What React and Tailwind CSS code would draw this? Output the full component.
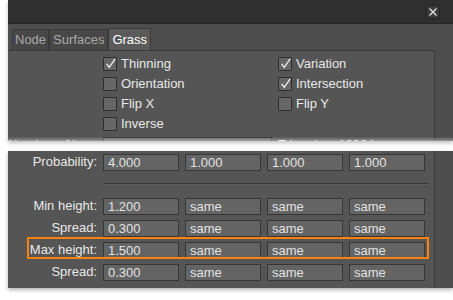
import React from "react";

function Check({ checked, label }) {
  return (
    <div className="flex items-center h-[20px] gap-[4px]">
      <div className="w-[14px] h-[14px] border border-[#2e2e2e] bg-[#666666] rounded-[1px] flex items-center justify-center">
        {checked && (
          <svg width="13" height="13" viewBox="0 0 13 13" className="-mt-[2px] ml-[1px]">
            <path d="M2 7 L5 11 L12 1" fill="none" stroke="#eeeeee" strokeWidth="1.6" />
          </svg>
        )}
      </div>
      <span className="text-[13px] text-[#e8e8e8]">{label}</span>
    </div>
  );
}

function Field({ value }) {
  return (
    <div className="h-[17px] border border-[#363636] bg-[#646464] px-[4px] flex items-center text-[13px] text-[#e2e2e2] leading-none">
      {value}
    </div>
  );
}

function Row({ label, values, highlight }) {
  return (
    <div className="relative flex items-center h-[22px]">
      <div className="w-[90px] text-right text-[13px] text-[#e8e8e8] pr-[1px] whitespace-nowrap">{label}</div>
      <div className="ml-[5px] grid grid-cols-[76px_76px_76px_76px] gap-[6px]">
        {values.map((v, i) => (
          <Field key={i} value={v} />
        ))}
      </div>
      {highlight && (
        <div className="absolute left-[19px] top-[-2px] w-[402px] h-[22px] border-2 border-[#f7820f] pointer-events-none" />
      )}
    </div>
  );
}

export default function App() {
  return (
    <div
      className="w-[453px] h-[300px] bg-white overflow-hidden"
      style={{ fontFamily: '"Liberation Sans", Arial, sans-serif' }}
    >
      {/* Top piece */}
      <div className="relative ml-[8px] h-[141px] bg-[#4e4e4e] overflow-hidden flex flex-col shadow-[0_2px_4px_rgba(0,0,0,0.25)]">
        <div className="h-[24px] shrink-0 bg-[#2f2f2f] border-b border-[#262626] flex items-center justify-end pr-[13px]">
          <div className="w-[14px] h-[14px] rounded-[2px] bg-[#3b3b3b] border border-[#232323] flex items-center justify-center">
            <svg width="10" height="10" viewBox="0 0 10 10">
              <path d="M1.5 1.5 L8.5 8.5 M8.5 1.5 L1.5 8.5" stroke="#e6e6e6" strokeWidth="1.3" />
            </svg>
          </div>
        </div>
        <div className="flex items-end h-[26px] shrink-0 pl-[4px]">
          <div className="h-[21px] px-[2px] bg-[#474747] border border-b-0 border-[#3a3a3a] text-[13px] text-[#a8a8a8] flex items-center">Node</div>
          <div className="h-[21px] px-[3px] bg-[#474747] border border-b-0 border-[#3a3a3a] text-[13px] text-[#a8a8a8] flex items-center">Surfaces</div>
          <div className="h-[22px] px-[3px] bg-[#5a5a5a] border border-b-0 border-[#3a3a3a] text-[13px] text-white flex items-center">Grass</div>
        </div>
        <div className="flex flex-1">
          <div className="w-[427px] bg-[#555555] border-t border-r border-[#3a3a3a] pt-[3px]">
            <div className="flex">
              <div className="ml-[95px] w-[175px] flex flex-col">
                <Check checked label="Thinning" />
                <Check label="Orientation" />
                <Check label="Flip X" />
                <Check label="Inverse" />
              </div>
              <div className="flex flex-col">
                <Check checked label="Variation" />
                <Check checked label="Intersection" />
                <Check label="Flip Y" />
              </div>
            </div>
            <div className="flex items-center h-[20px] mt-[1px]">
              <div className="w-[90px] text-right text-[13px] text-[#e8e8e8] pr-[1px] whitespace-nowrap">Number of lanes:</div>
              <div className="ml-[5px] w-[169px] h-[17px] border border-[#363636] bg-[#646464]" />
              <div className="ml-[6px] text-[13px] text-[#e8e8e8] whitespace-nowrap">Triangles: 12984</div>
            </div>
          </div>
          <div className="flex-1 bg-[#4e4e4e]" />
        </div>
        <div className="absolute left-0 right-0 bottom-0 h-[4px] bg-gradient-to-b from-transparent to-white/40 pointer-events-none" />
      </div>

      {/* Bottom piece */}
      <div className="ml-[8px] mt-[10px] h-[137px] bg-[#4e4e4e] flex shadow-[0_2px_4px_rgba(0,0,0,0.3)]">
        <div className="w-[427px] bg-[#555555] border-r border-[#3a3a3a] flex flex-col">
          <Row label="Probability:" values={["4.000", "1.000", "1.000", "1.000"]} />
          <div className="ml-[96px] mt-[10px] mb-[10px] w-[324px] h-[2px] border-t border-[#343434] border-b border-b-[#5e5e5e]" />
          <Row label="Min height:" values={["1.200", "same", "same", "same"]} />
          <Row label="Spread:" values={["0.300", "same", "same", "same"]} />
          <Row label="Max height:" values={["1.500", "same", "same", "same"]} highlight />
          <Row label="Spread:" values={["0.300", "same", "same", "same"]} />
        </div>
        <div className="flex-1 bg-[#4e4e4e]" />
      </div>
    </div>
  );
}
